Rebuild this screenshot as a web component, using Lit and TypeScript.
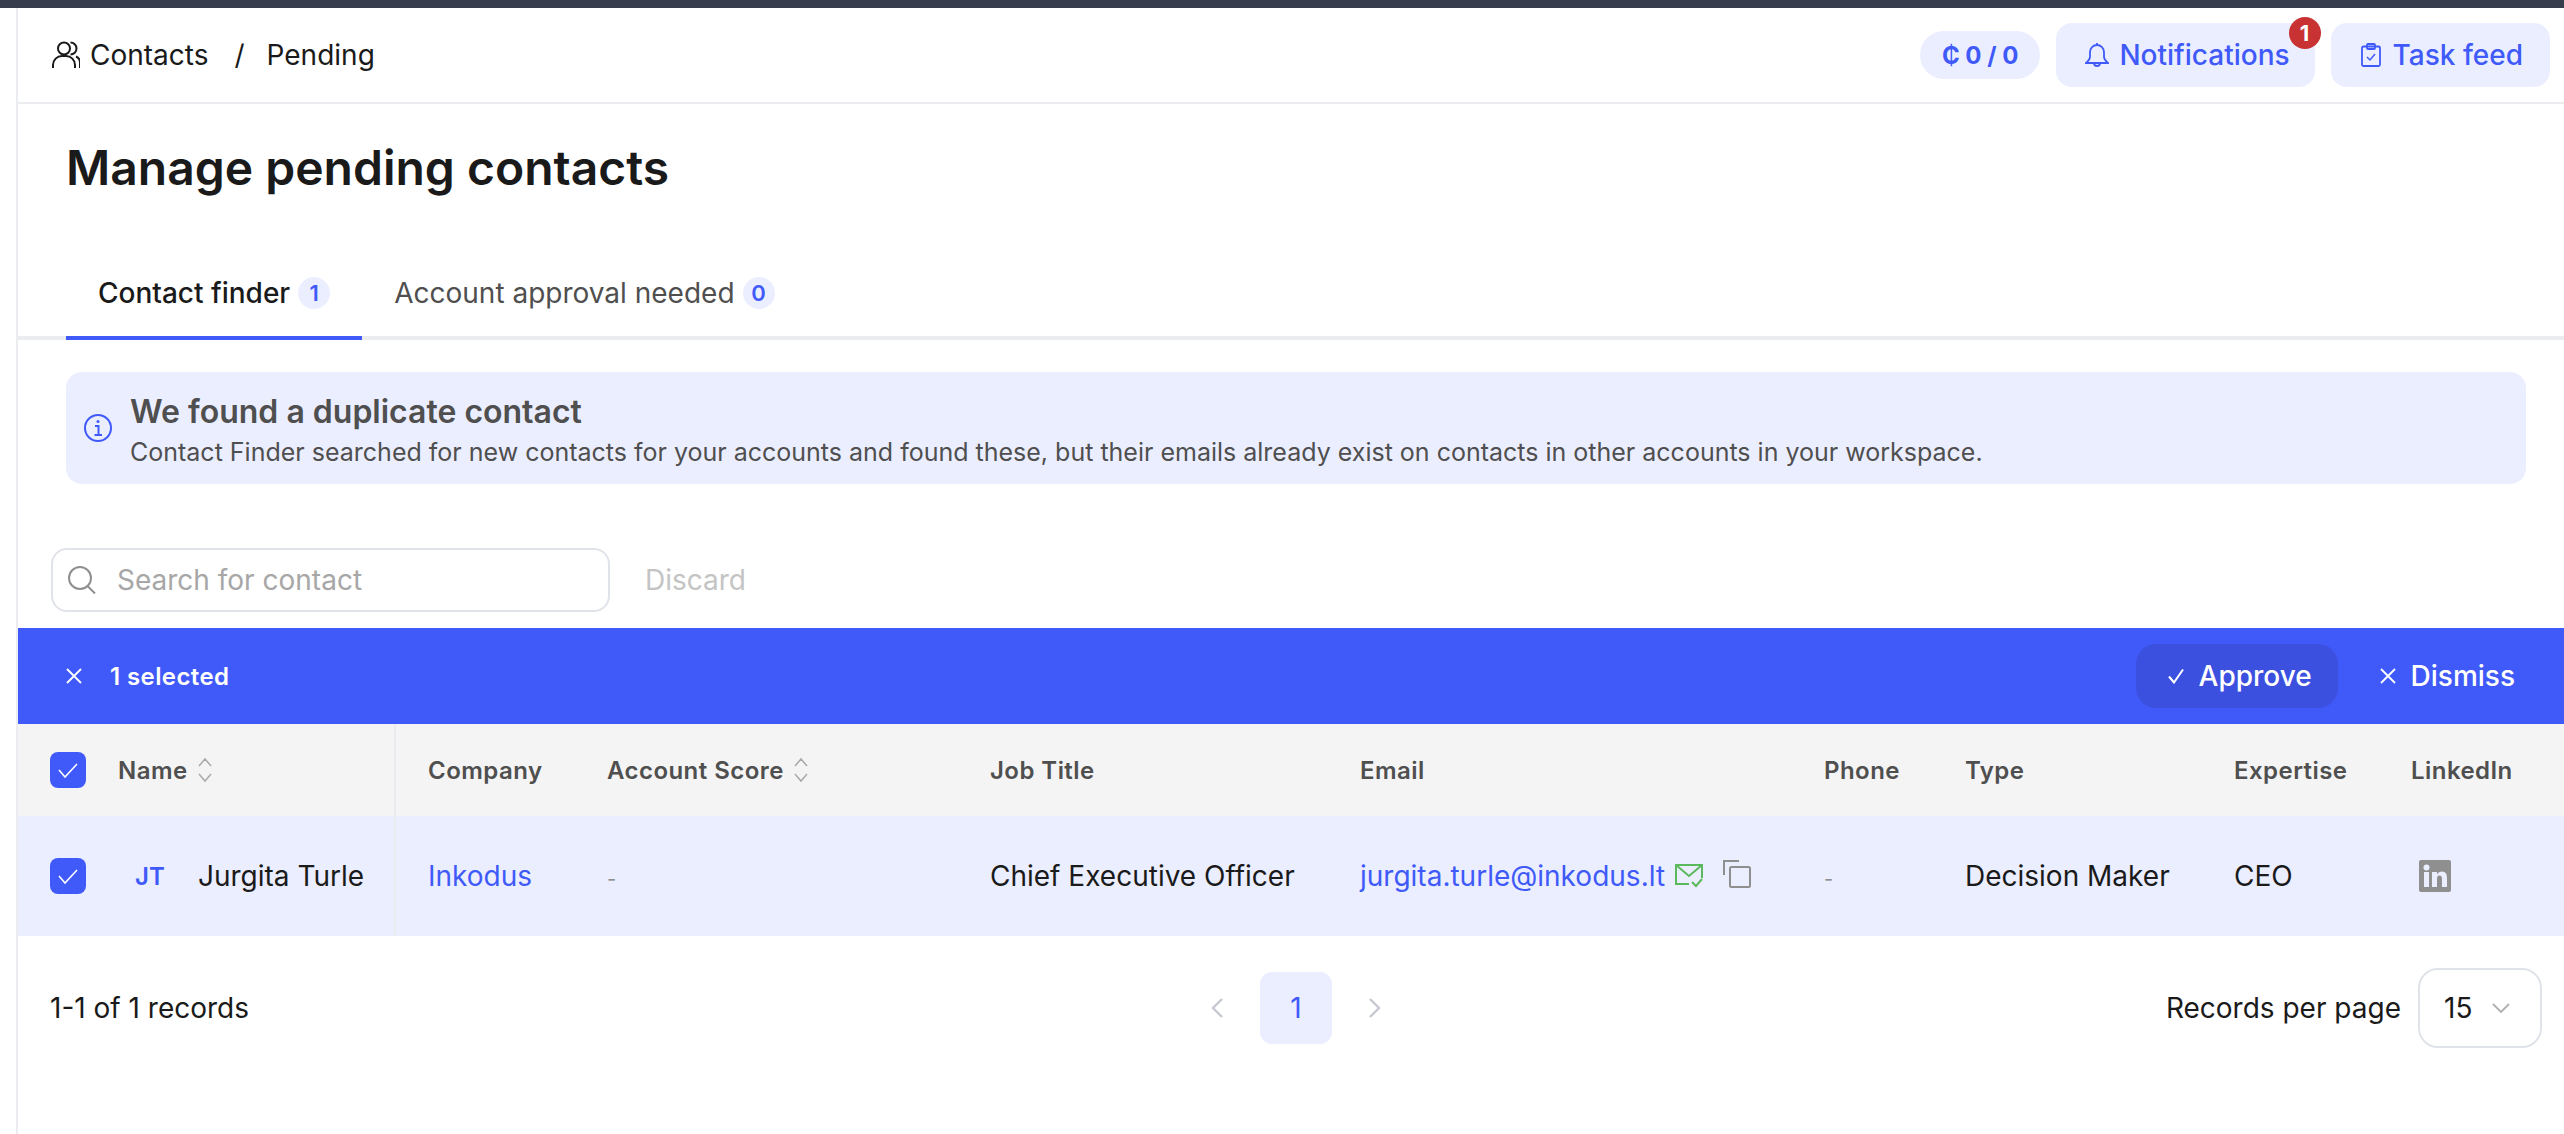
import { LitElement, html, css, svg } from "lit";
import { customElement } from "lit/decorators.js";

const stroke = (w: number, h: number, vb: string, body: unknown, cls = "") => html`<svg class=${cls} width=${w} height=${h} viewBox=${vb} fill="none" stroke="currentColor">${body}</svg>`;

const icons = {
  people: stroke(28, 28, "0 0 28 28", svg`<circle cx="12" cy="7.5" r="6" stroke-width="2"/><path d="M1 27v-3a9 9 0 0 1 9-9h4a9 9 0 0 1 9 9v3M18.500 1.500a6 6 0 0 1 0 12M24 15.500a7 7 0 0 1 4 7v4.500" stroke-width="2"/>`),
  bell: stroke(24, 26, "0 0 24 26", svg`<path d="M12 3a7 7 0 0 0-7 7v5c0 2.500-2 4-4 6h22c-2-2-4-3.500-4-6v-5a7 7 0 0 0-7-7ZM12 1v2M9 21a3 3 0 0 0 6 0" stroke-width="1.800"/>`),
  task: stroke(20, 24, "0 0 20 24", svg`<rect x="1" y="3.500" width="18" height="19.500" rx="1.500" stroke-width="1.800"/><rect x="6" y="1" width="8" height="5" rx="1" stroke-width="1.800"/><path d="m6 14 3 3 5-6" stroke-width="1.500"/>`),
  info: stroke(28, 28, "0 0 28 28", svg`<circle cx="14" cy="14" r="13" stroke-width="2"/><path d="M11 12h3.500v9M10.500 21h7.500" stroke-width="2"/><circle cx="14" cy="7.500" r="1.500" fill="currentColor" stroke="none"/>`),
  search: stroke(28, 28, "0 0 28 28", svg`<circle cx="12" cy="12" r="11" stroke-width="2"/><path d="m19.500 20 7.500 7.500" stroke-width="2"/>`),
  x: stroke(16, 16, "0 0 16 16", svg`<path d="m1 1 14 14M15 1 1 15" stroke-width="1.800"/>`),
  check: stroke(16, 16, "0 0 16 16", svg`<path d="m1 8.500 5 6L15 1.500" stroke-width="2"/>`),
  boxCheck: stroke(20, 15, "0 0 20 15", svg`<path d="m1 7 6 7L19 1" stroke-width="1.600"/>`),
  sort: stroke(16, 26, "0 0 16 26", svg`<path d="m2 9 6-7 6 7M2 17l6 7 6-7" stroke-width="1.500"/>`),
  mail: stroke(28, 24, "0 0 28 24", svg`<path d="M14 20H1V1h26v13M1 1l13 11L27 1" stroke-width="2"/><path d="m17 18 4 4 6-7" stroke-width="2"/>`),
  copy: stroke(28, 28, "0 0 28 28", svg`<path d="M1 15V1h15" stroke-width="2"/><rect x="7" y="7" width="20" height="20" rx="1.500" stroke-width="2"/>`),
  linkedin: svg`<svg width="32" height="32" viewBox="0 0 32 32"><rect width="32" height="32" rx="2" fill="#8f8f8f"/><g fill="#ebeeff"><rect x="5" y="12" width="5" height="15"/><circle cx="7.500" cy="7.500" r="3"/><path d="M13 12h5v2.500c1-2 3-3 5-3 4 0 5 3 5 6.500v9h-5v-8c0-2-.500-3.500-2.500-3.500S18 17 18 19v8h-5Z"/></g></svg>`,
  left: stroke(12, 20, "0 0 12 20", svg`<path d="M11 1 2 10l9 9" stroke-width="2.400"/>`),
  right: stroke(12, 20, "0 0 12 20", svg`<path d="m1 1 9 9-9 9" stroke-width="2.400"/>`),
  down: stroke(18, 12, "0 0 18 12", svg`<path d="m1 2 8 8 8-8" stroke-width="1.800"/>`),
};

@customElement("app-root")
export class AppRoot extends LitElement {
  static styles = css`
    :host { display: block; min-height: 1134px; background: #fff; color: #1a1a1a; font-family: Inter, "Liberation Sans", sans-serif; font-size: 28px; overflow: hidden; }
    svg { display: block; flex: none; }
    .strip { height: 8px; background: #383d4e; }
    .shell { margin-left: 16px; border-left: 2px solid #ebecf0; min-height: 1126px; }
    .top { height: 94px; border-bottom: 2px solid #ebecf0; display: flex; align-items: center; justify-content: space-between; padding: 0 14px 0 34px; }
    .crumbs { display: flex; align-items: center; }
    .crumbs svg { margin-right: 10px; }
    .sep { margin: 0 22px 0 26px; }
    .actions { display: flex; align-items: center; gap: 16px; }
    .credit { height: 48px; padding: 0 22px; border-radius: 24px; background: #ebeeff; color: #405af9; display: flex; align-items: center; font-size: 24px; font-weight: 700; }
    .btn { position: relative; height: 64px; border-radius: 16px; background: #ebeeff; color: #405af9; display: flex; align-items: center; font-weight: 500; font-size: 28px; }
    .btn.n { padding: 0 25px 0 29px; gap: 10px; }
    .btn.t { padding: 0 27px 0 30px; gap: 12px; }
    .notif { position: absolute; top: -6px; right: -6px; width: 32px; height: 32px; border-radius: 50%; background: #c83232; color: #fff; font-size: 22px; font-weight: 700; display: flex; align-items: center; justify-content: center; }
    h1 { margin: 0; padding: 34px 0 0 48px; font-size: 48px; line-height: 60px; font-weight: 600; color: #1a1a1a; }
    .tabs { display: flex; height: 87px; margin-top: 51px; padding-left: 48px; border-bottom: 4px solid #ebecf0; }
    .tab { display: flex; align-items: center; padding: 0 32px; gap: 8px; font-size: 28px; color: #4f4f4f; margin-bottom: -4px; border-bottom: 4px solid transparent; }
    .tab.on { color: #1a1a1a; font-weight: 500; border-bottom-color: #405af9; }
    .count { width: 32px; height: 32px; border-radius: 50%; background: #ebeeff; color: #405af9; font-size: 22px; font-weight: 600; display: flex; align-items: center; justify-content: center; }
    .alert { margin: 32px 38px 0 48px; height: 112px; border-radius: 16px; background: #ebeeff; display: flex; align-items: center; padding-left: 18px; gap: 18px; color: #4f4f4f; }
    .alert svg { color: #405af9; }
    .alert > div { padding-top: 8px; }
    .alert b { display: block; font-size: 32px; line-height: 40px; font-weight: 600; }
    .alert span { display: block; font-size: 25px; line-height: 40px; }
    .tools { display: flex; align-items: center; margin-top: 64px; padding-left: 33px; height: 64px; }
    .search { box-sizing: border-box; width: 559px; height: 64px; border: 2px solid #e0e3e9; border-radius: 16px; display: flex; align-items: center; padding-left: 15px; gap: 21px; color: #a7a7a7; }
    .search svg { color: #8f8f8f; }
    .discard { margin-left: 35px; color: #c4c4c4; }
    .bulk { margin-top: 16px; height: 96px; background: #405af9; color: #fff; display: flex; align-items: center; padding: 0 49px 0 48px; }
    .bulk .sel { margin-left: 28px; font-size: 24px; font-weight: 600; letter-spacing: .4px; }
    .bulk .grow { flex: 1; }
    .approve { height: 64px; width: 202px; box-sizing: border-box; padding-left: 32px; gap: 15px; border-radius: 20px; background: #3c50e0; display: flex; align-items: center; font-weight: 500; }
    .dismiss { margin-left: 42px; display: flex; align-items: center; gap: 15px; font-weight: 500; }
    .row { display: grid; grid-template-columns: 378px 179px 383px 370px 464px 141px 269px 177px 1fr; align-items: center; }
    .row.head { height: 92px; background: #f4f4f4; color: #4f4f4f; font-size: 24px; font-weight: 600; letter-spacing: .45px; }
    .row.body { height: 120px; background: #ebeeff; }
    .row > div { padding-left: 32px; display: flex; align-items: center; height: 100%; min-width: 0; white-space: nowrap; }
    .row > .namecell { box-sizing: border-box; padding-left: 32px; border-right: 2px solid #ebecf0; }
    .box { width: 36px; height: 36px; border-radius: 8px; background: #405af9; color: #fff; display: flex; align-items: center; justify-content: center; flex: none; }
    .head .box { margin-right: 32px; }
    .sort { color: #a9a9a9; margin-left: 9px; }
    .jt { margin-left: 49px; width: 63px; color: #405af9; font-size: 24px; font-weight: 600; }
    .blue { color: #405af9; }
    .row > .dash { color: #8f8f8f; font-size: 20px; box-sizing: border-box; padding-top: 6px; }
    .mail { color: #5cb85c; margin-left: 10px; }
    .copy { color: #8f8f8f; margin-left: 20px; margin-top: -5px; }
    .row > .li { padding-left: 40px; }
    .foot { display: grid; grid-template-columns: 1fr auto 1fr; align-items: center; padding: 32px 22px 0 32px; }
    .pager { display: flex; align-items: center; gap: 37px; color: #c6c9d0; }
    .page { width: 72px; height: 72px; border-radius: 12px; background: #ebeeff; color: #405af9; display: flex; align-items: center; justify-content: center; font-size: 28px; }
    .per { display: flex; align-items: center; justify-content: flex-end; gap: 17px; }
    .select { box-sizing: border-box; width: 124px; height: 80px; border: 2px solid #e0e3e9; border-radius: 20px; display: flex; align-items: center; padding-left: 24px; gap: 20px; }
    .select svg { color: #b0b0b0; }
  `;

  render() {
    return html`
      <div class="strip"></div>
      <div class="shell">
        <header class="top">
          <div class="crumbs">${icons.people}<span>Contacts</span><span class="sep">/</span><span>Pending</span></div>
          <div class="actions">
            <div class="credit">₵ 0 / 0</div>
            <div class="btn n">${icons.bell}<span>Notifications</span><span class="notif">1</span></div>
            <div class="btn t">${icons.task}<span>Task feed</span></div>
          </div>
        </header>
        <h1>Manage pending contacts</h1>
        <nav class="tabs">
          <div class="tab on">Contact finder <span class="count">1</span></div>
          <div class="tab">Account approval needed <span class="count">0</span></div>
        </nav>
        <section class="alert">
          ${icons.info}
          <div><b>We found a duplicate contact</b><span>Contact Finder searched for new contacts for your accounts and found these, but their emails already exist on contacts in other accounts in your workspace.</span></div>
        </section>
        <div class="tools">
          <div class="search">${icons.search}<span>Search for contact</span></div>
          <span class="discard">Discard</span>
        </div>
        <div class="bulk">
          ${icons.x}<span class="sel">1 selected</span><span class="grow"></span>
          <div class="approve">${icons.check}<span>Approve</span></div>
          <div class="dismiss">${icons.x}<span>Dismiss</span></div>
        </div>
        <div class="row head">
          <div class="namecell"><span class="box">${icons.boxCheck}</span>Name<span class="sort">${icons.sort}</span></div>
          <div>Company</div>
          <div>Account Score<span class="sort">${icons.sort}</span></div>
          <div>Job Title</div>
          <div>Email</div>
          <div>Phone</div>
          <div>Type</div>
          <div>Expertise</div>
          <div>LinkedIn</div>
        </div>
        <div class="row body">
          <div class="namecell"><span class="box">${icons.boxCheck}</span><span class="jt">JT</span>Jurgita Turle</div>
          <div class="blue">Inkodus</div>
          <div class="dash">-</div>
          <div>Chief Executive Officer</div>
          <div><span class="blue">jurgita.turle@inkodus.lt</span><span class="mail">${icons.mail}</span><span class="copy">${icons.copy}</span></div>
          <div class="dash">-</div>
          <div>Decision Maker</div>
          <div>CEO</div>
          <div class="li">${icons.linkedin}</div>
        </div>
        <footer class="foot">
          <div>1-1 of 1 records</div>
          <div class="pager">${icons.left}<span class="page">1</span>${icons.right}</div>
          <div class="per"><span>Records per page</span><div class="select"><span>15</span>${icons.down}</div></div>
        </footer>
      </div>
    `;
  }
}
